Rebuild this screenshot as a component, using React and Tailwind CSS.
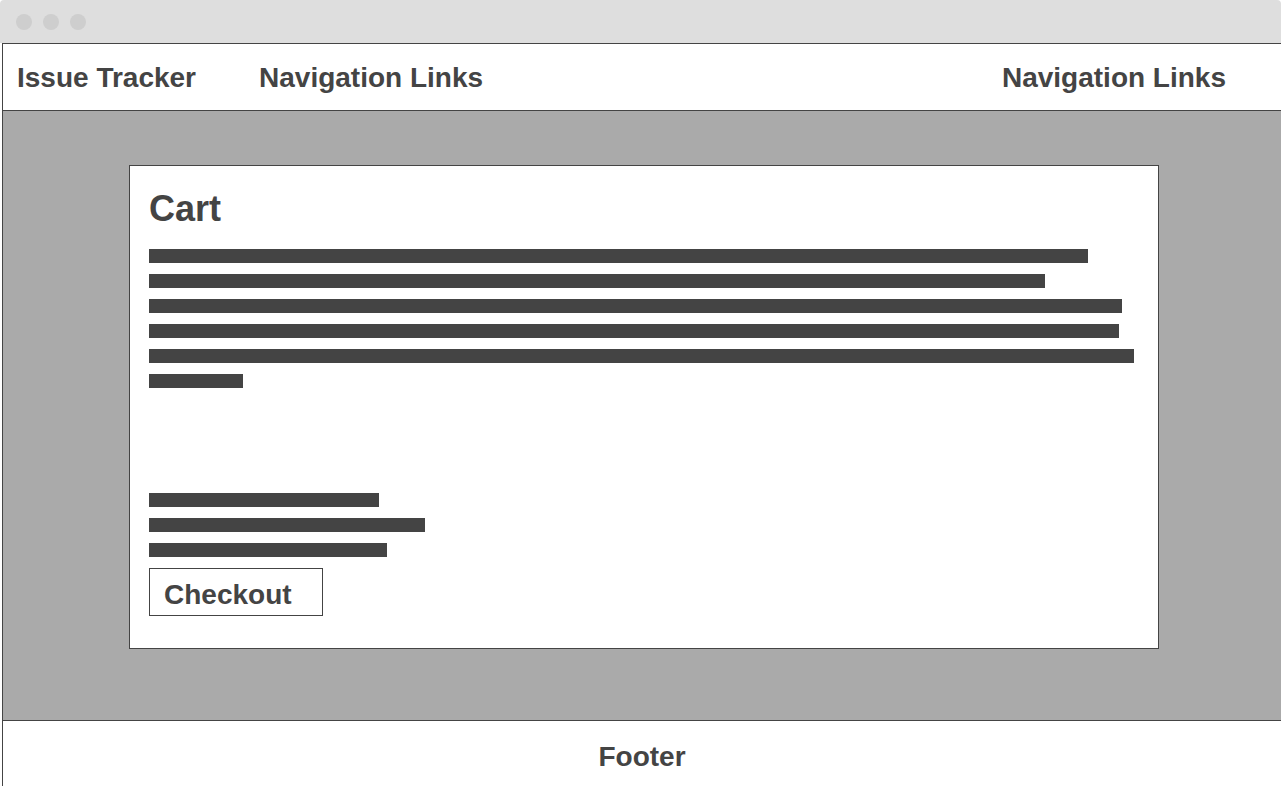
export default function App() {
  const topBars = [939, 896, 973, 970, 985, 94];
  const totalBars = [230, 276, 238];

  return (
    <div className="w-[1281px] h-[786px] overflow-hidden bg-white text-[#444] font-['Liberation_Sans',Arial,sans-serif]">
      {/* Window chrome */}
      <div className="h-[43px] bg-[#dedede] rounded-t-[4px] flex items-center pl-[16px] gap-[11px]">
        <span className="w-4 h-4 rounded-full bg-[#cecece]" />
        <span className="w-4 h-4 rounded-full bg-[#cecece]" />
        <span className="w-4 h-4 rounded-full bg-[#cecece]" />
      </div>

      <div className="ml-[2px] border-l border-t border-[#444] flex flex-col">
        {/* Header */}
        <header className="h-[67px] border-b border-[#444] flex items-center pt-[2px] pl-[14px] pr-[55px] text-[28px] font-bold">
          <span>Issue Tracker</span>
          <span className="ml-[63px]">Navigation Links</span>
          <span className="ml-auto">Navigation Links</span>
        </header>

        {/* Main */}
        <main className="h-[610px] bg-[#aaaaaa] border-b border-[#444] pt-[54px] pl-[126px]">
          <div className="w-[1030px] h-[484px] bg-white border border-[#444] pl-[19px] pt-[23px]">
            <h1 className="text-[36px] leading-[40px] font-bold">Cart</h1>
            <div className="mt-[20px] flex flex-col gap-[11px]">
              {topBars.map((w, i) => (
                <div key={i} className="h-[14px] bg-[#444]" style={{ width: w }} />
              ))}
            </div>
            <div className="mt-[105px] flex flex-col gap-[11px]">
              {totalBars.map((w, i) => (
                <div key={i} className="h-[14px] bg-[#444]" style={{ width: w }} />
              ))}
            </div>
            <button className="mt-[11px] w-[174px] h-[48px] border border-[#444] text-left pl-[14px] pt-[6px] text-[28px] font-bold leading-[32px]">
              Checkout
            </button>
          </div>
        </main>

        {/* Footer */}
        <footer className="h-[66px] flex justify-center pt-[20px] text-[28px] font-bold leading-[32px]">
          Footer
        </footer>
      </div>
    </div>
  );
}
